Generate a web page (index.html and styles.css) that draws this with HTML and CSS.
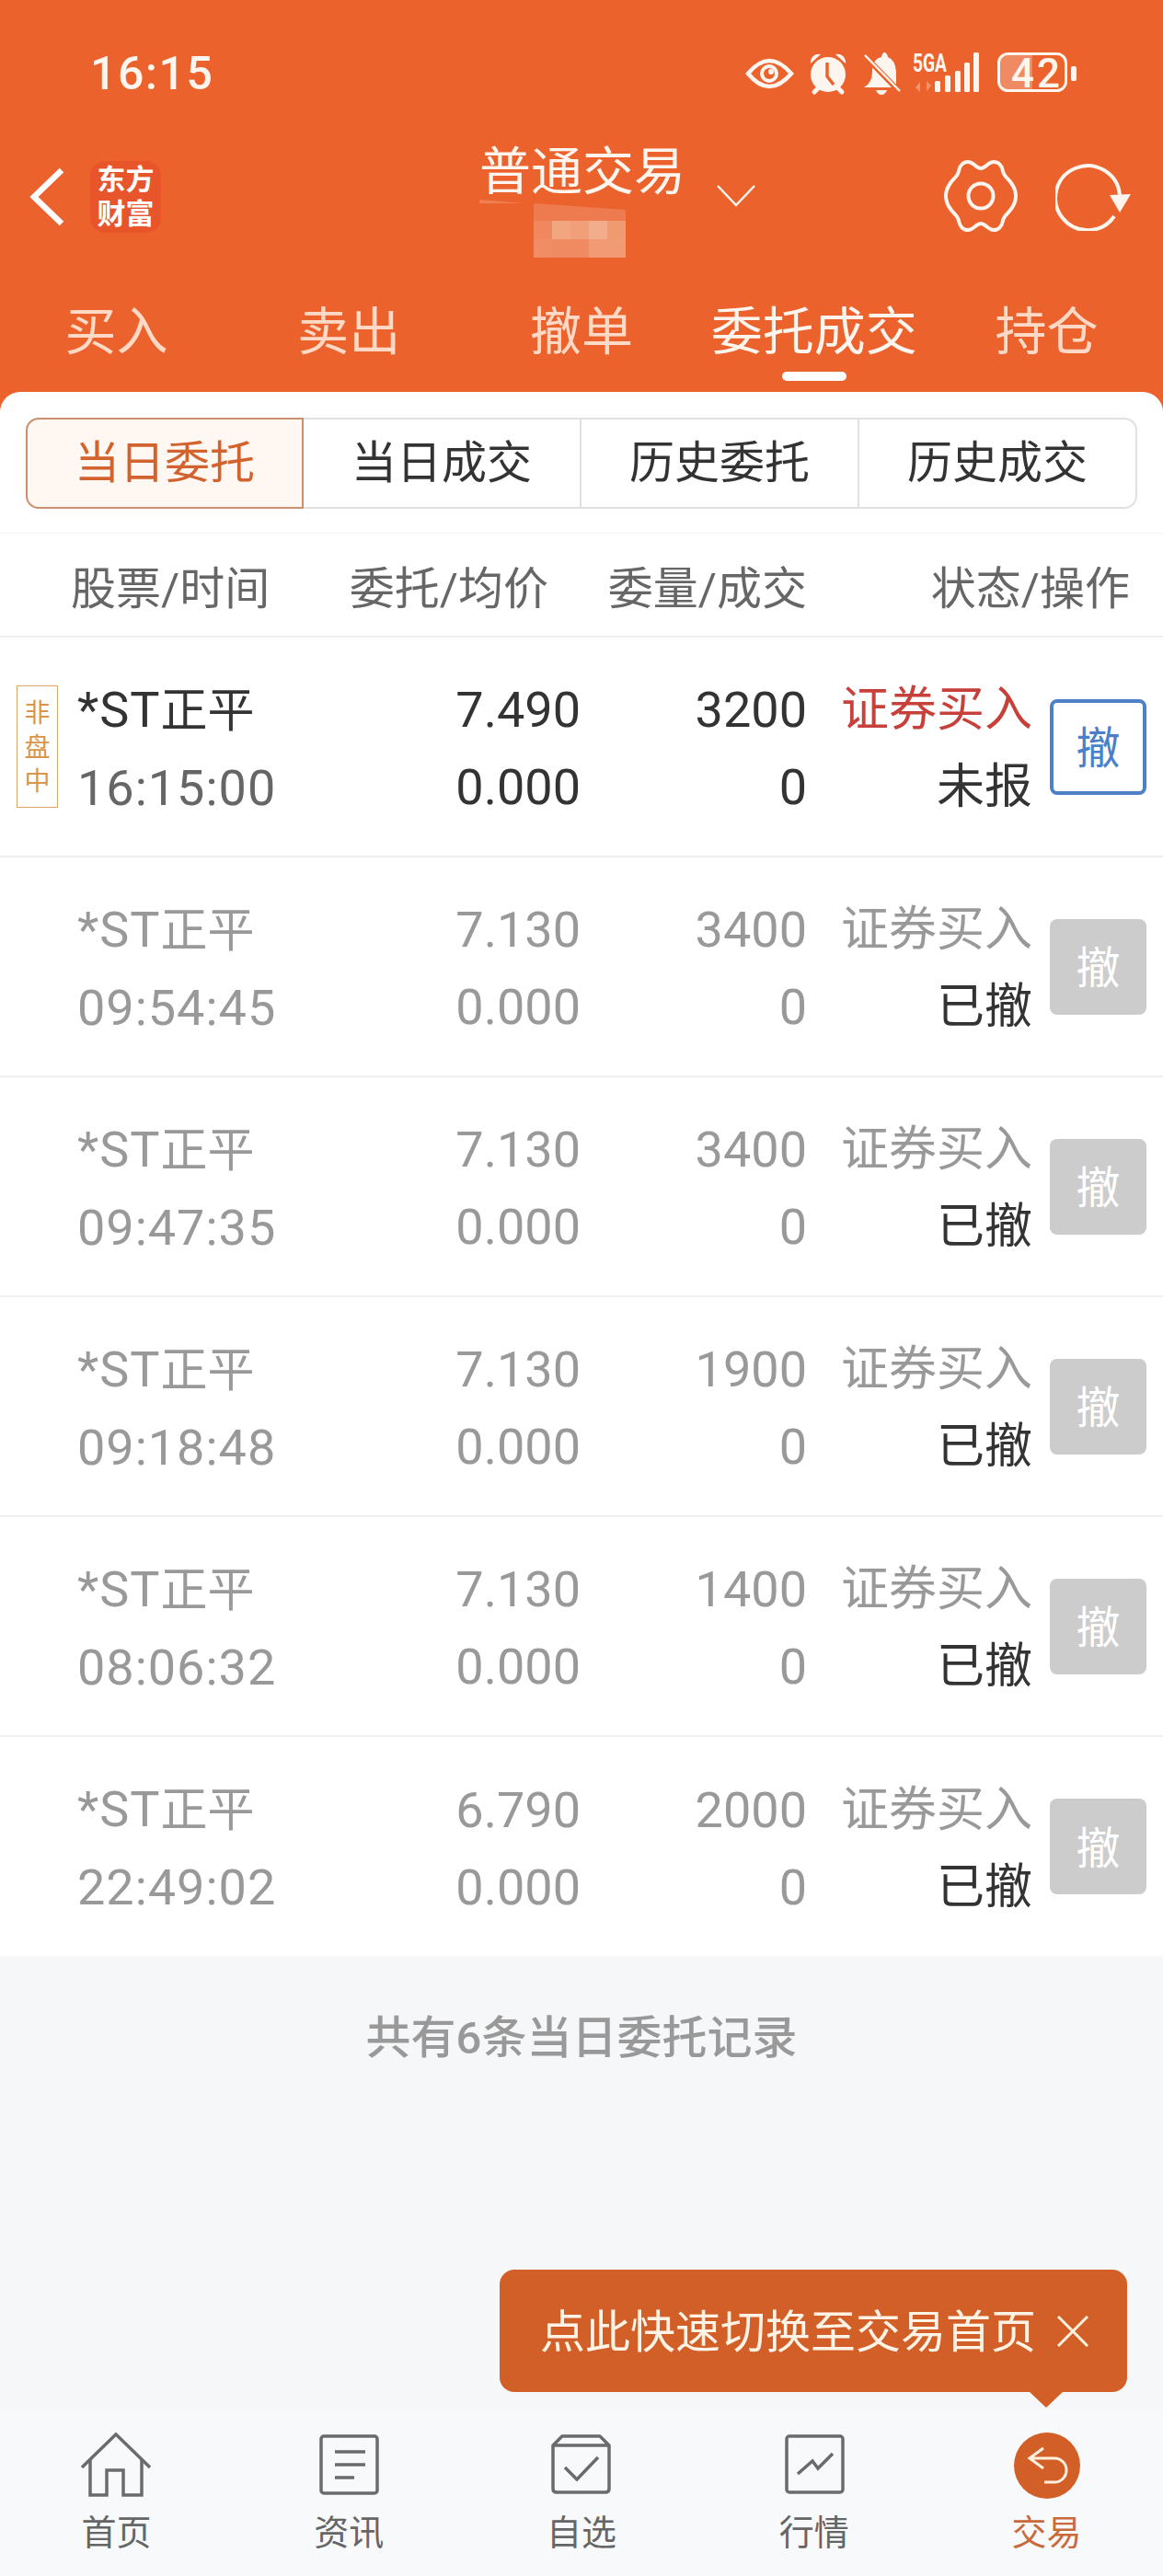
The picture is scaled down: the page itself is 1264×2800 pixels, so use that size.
FILE: index.html
```html
<!DOCTYPE html>
<html lang="zh-CN">
<head>
    <meta charset="UTF-8">
    <meta name="viewport" content="width=device-width, initial-scale=1.0">
    <title>委托成交</title>
    <link rel="stylesheet" href="styles.css">
</head>
<body>
<div class="app">
    <div class="top">
        <div class="statusbar">
            <span class="clock">16:15</span>
            <svg class="status-icons" width="370" height="60" viewBox="805 45 370 60">
                <!-- eye -->
                <path d="M813 80Q836 52 860 80Q836 108 813 80Z" fill="none" stroke="#fff5ef" stroke-width="4.5"/>
                <circle cx="836" cy="80" r="10" fill="#fff5ef"/>
                <circle cx="836" cy="80" r="6" fill="#ec622c"/>
                <circle cx="838" cy="78" r="3" fill="#fff5ef"/>
                <!-- alarm -->
                <circle cx="900" cy="81" r="19" fill="#fff5ef"/>
                <path d="M881 69A9 9 0 0 1 892 59Z M919 69A9 9 0 0 0 908 59Z" fill="#fff5ef"/>
                <path d="M885 100L890 95M915 100L910 95" stroke="#fff5ef" stroke-width="5" stroke-linecap="round"/>
                <path d="M899 68V83L906 92" fill="none" stroke="#ec622c" stroke-width="3.5"/>
                <!-- muted bell -->
                <path d="M939 95Q948 90 948 78Q948 64 958 62Q959 57 961 57Q964 57 965 62Q973 65 974 78V95Z" fill="#fff5ef"/>
                <path d="M952 98H964Q962 103 958 103Q954 103 952 98Z" fill="#fff5ef"/>
                <path d="M939 60L977 99" stroke="#ec622c" stroke-width="6"/>
                <path d="M940 60L978 99" stroke="#fff5ef" stroke-width="2.5"/>
                <!-- signal -->
                <text class="net" x="992" y="78" textLength="37" lengthAdjust="spacingAndGlyphs">5GA</text>
                <path d="M1000 100V89L995 95ZM1007 88V99L1012 93Z" fill="#f5936c"/>
                <g fill="#fff5ef">
                    <rect x="1016" y="88" width="6" height="12" rx="1.5"/>
                    <rect x="1027" y="82" width="6" height="18" rx="1.5"/>
                    <rect x="1038" y="77" width="6" height="23" rx="1.5"/>
                    <rect x="1048" y="68" width="6" height="32" rx="1.5"/>
                    <rect x="1058" y="57" width="6" height="43" rx="1.5"/>
                </g>
                <!-- battery -->
                <path d="M1094 60H1122V97H1094Q1087 97 1087 90V67Q1087 60 1094 60Z" fill="#f08a63"/>
                <rect x="1085.5" y="58.5" width="73" height="40" rx="10" fill="none" stroke="#fff5ef" stroke-width="3"/>
                <rect x="1164" y="72" width="6" height="16" rx="2" fill="#fff5ef"/>
                <text class="batt" x="1099" y="95">42</text>
            </svg>
        </div>

        <div class="navrow">
            <div class="nav-left">
                <svg class="back" width="40" height="66" viewBox="0 0 40 66">
                    <path d="M35 4L5 33L35 62" fill="none" stroke="#fff" stroke-width="6.5"/>
                </svg>
                <div class="logo"><span>东方</span><span>财富</span></div>
            </div>
            <div class="title-box">
                <div class="title">普通交易</div>
                <svg class="mosaic" width="220" height="64" viewBox="521 216 220 64">
                    <polygon points="520,217 570,221 520,221" fill="#ef7f52"/>
                    <polygon points="580,221 680,228 680,240 580,240" fill="#ee7b4f"/>
                    <rect x="580" y="240" width="20" height="20" fill="#f0885f"/>
                    <rect x="600" y="240" width="20" height="20" fill="#f2a680"/>
                    <rect x="620" y="240" width="20" height="20" fill="#f09f78"/>
                    <rect x="640" y="240" width="20" height="20" fill="#f2ae8c"/>
                    <rect x="660" y="240" width="20" height="20" fill="#f09a72"/>
                    <rect x="580" y="260" width="20" height="20" fill="#f08d66"/>
                    <rect x="600" y="260" width="40" height="20" fill="#f08a62"/>
                    <rect x="640" y="260" width="40" height="20" fill="#f19a74"/>
                </svg>
            </div>
            <svg class="caret" width="42" height="24" viewBox="0 0 42 24">
                <path d="M1 1L21 22L41 1" fill="none" stroke="#fff5ef" stroke-width="2.5"/>
            </svg>
            <div class="nav-right">
                <svg width="80" height="80" viewBox="0 0 80 80">
                    <path d="M40 10C45 10 48 3 54 3C59 3 63 7 64 13C65 19 70 21 73 26C76 30 78 35 78 40C78 45 76 50 73 54C70 59 65 61 64 67C63 73 59 77 54 77C48 77 45 70 40 70C35 70 32 77 26 77C21 77 17 73 16 67C15 61 10 59 7 54C4 50 2 45 2 40C2 35 4 30 7 26C10 21 15 19 16 13C17 7 21 3 26 3C32 3 35 10 40 10Z" fill="none" stroke="#fff5ef" stroke-width="4"/>
                    <circle cx="40" cy="40" r="13.5" fill="none" stroke="#fff5ef" stroke-width="4"/>
                </svg>
                <svg width="84" height="76" viewBox="1147 175 84 76">
                    <path d="M1211 235A35 35 0 1 1 1217 212" fill="none" stroke="#fff5ef" stroke-width="4"/>
                    <polygon points="1206,212 1229,211 1217,231" fill="#fff5ef"/>
                </svg>
            </div>
        </div>

        <div class="maintabs">
            <a>买入</a>
            <a>卖出</a>
            <a>撤单</a>
            <a class="on">委托成交</a>
            <a>持仓</a>
        </div>
    </div>

    <div class="card">
        <div class="segs">
            <a class="on">当日委托</a>
            <a>当日成交</a>
            <a>历史委托</a>
            <a>历史成交</a>
        </div>

        <div class="thead">
            <span>股票/时间</span>
            <span>委托/均价</span>
            <span>委量/成交</span>
            <span>状态/操作</span>
        </div>

        <div class="row live">
            <div class="badge">非<br>盘<br>中</div>
            <div class="col-name"><span class="name">*ST<em>正平</em></span><span class="time">16:15:00</span></div>
            <div class="col-num"><span>7.490</span><span>0.000</span></div>
            <div class="col-num"><span>3200</span><span>0</span></div>
            <div class="col-state"><span class="kind">证券买入</span><span class="state">未报</span></div>
            <button class="cancel">撤</button>
        </div>
        <div class="row">
            <div class="slot"></div>
            <div class="col-name"><span class="name">*ST<em>正平</em></span><span class="time">09:54:45</span></div>
            <div class="col-num"><span>7.130</span><span>0.000</span></div>
            <div class="col-num"><span>3400</span><span>0</span></div>
            <div class="col-state"><span class="kind">证券买入</span><span class="state">已撤</span></div>
            <button class="cancel">撤</button>
        </div>
        <div class="row">
            <div class="slot"></div>
            <div class="col-name"><span class="name">*ST<em>正平</em></span><span class="time">09:47:35</span></div>
            <div class="col-num"><span>7.130</span><span>0.000</span></div>
            <div class="col-num"><span>3400</span><span>0</span></div>
            <div class="col-state"><span class="kind">证券买入</span><span class="state">已撤</span></div>
            <button class="cancel">撤</button>
        </div>
        <div class="row">
            <div class="slot"></div>
            <div class="col-name"><span class="name">*ST<em>正平</em></span><span class="time">09:18:48</span></div>
            <div class="col-num"><span>7.130</span><span>0.000</span></div>
            <div class="col-num"><span>1900</span><span>0</span></div>
            <div class="col-state"><span class="kind">证券买入</span><span class="state">已撤</span></div>
            <button class="cancel">撤</button>
        </div>
        <div class="row">
            <div class="slot"></div>
            <div class="col-name"><span class="name">*ST<em>正平</em></span><span class="time">08:06:32</span></div>
            <div class="col-num"><span>7.130</span><span>0.000</span></div>
            <div class="col-num"><span>1400</span><span>0</span></div>
            <div class="col-state"><span class="kind">证券买入</span><span class="state">已撤</span></div>
            <button class="cancel">撤</button>
        </div>
        <div class="row last">
            <div class="slot"></div>
            <div class="col-name"><span class="name">*ST<em>正平</em></span><span class="time">22:49:02</span></div>
            <div class="col-num"><span>6.790</span><span>0.000</span></div>
            <div class="col-num"><span>2000</span><span>0</span></div>
            <div class="col-state"><span class="kind">证券买入</span><span class="state">已撤</span></div>
            <button class="cancel">撤</button>
        </div>
    </div>

    <div class="summary">共有6条当日委托记录</div>

    <div class="tabbar">
        <a>
            <svg width="80" height="72" viewBox="0 0 80 72">
                <path d="M3 38L40 2L77 38" fill="none" stroke="#6b6b6b" stroke-width="3.5"/>
                <path d="M12 29V68H30V41H48V68H68V29" fill="none" stroke="#6b6b6b" stroke-width="3.5"/>
            </svg>
            <span>首页</span>
        </a>
        <a>
            <svg width="80" height="72" viewBox="0 0 80 72">
                <rect x="10" y="4" width="61" height="62" rx="3" fill="none" stroke="#6b6b6b" stroke-width="3.5"/>
                <path d="M25 21H58M25 35H58M25 49H46" fill="none" stroke="#6b6b6b" stroke-width="3.5"/>
            </svg>
            <span>资讯</span>
        </a>
        <a>
            <svg width="80" height="72" viewBox="0 0 80 72">
                <path d="M9 14L19 4H60L70 14V61Q70 65 66 65H13Q9 65 9 61ZM9 14H70" fill="none" stroke="#6b6b6b" stroke-width="3.5" stroke-linejoin="round"/>
                <path d="M22 38L35 51L58 27" fill="none" stroke="#6b6b6b" stroke-width="3.5"/>
            </svg>
            <span>自选</span>
        </a>
        <a>
            <svg width="80" height="72" viewBox="0 0 80 72">
                <rect x="10" y="4" width="61" height="61" rx="3" fill="none" stroke="#6b6b6b" stroke-width="3.5"/>
                <path d="M22 45L38 31L44 39L60 23" fill="none" stroke="#6b6b6b" stroke-width="3.5"/>
            </svg>
            <span>行情</span>
        </a>
        <a class="on">
            <svg width="80" height="72" viewBox="0 0 80 72">
                <circle cx="40" cy="36" r="36" fill="#d35f28"/>
                <path d="M36 17L21 28L36 39M21 28H48A13 13 0 0 1 48 54H37" fill="none" stroke="#fff0e0" stroke-width="3"/>
            </svg>
            <span>交易</span>
        </a>
    </div>

    <div class="tip">
        <span>点此快速切换至交易首页</span>
        <svg width="34" height="34" viewBox="0 0 34 34">
            <path d="M1 1L33 33M33 1L1 33" stroke="#fff0e0" stroke-width="3"/>
        </svg>
    </div>
</div>
</body>
</html>
```

FILE: styles.css
```css
* {
    box-sizing: border-box;
    margin: 0;
    padding: 0;
    font-family: Roboto, "Noto Sans CJK SC", sans-serif;
}

body {
    background: #f5f7f9;
}

.app {
    position: relative;
    width: 1264px;
    height: 2800px;
    display: flex;
    flex-direction: column;
    overflow: hidden;
}

/* orange header */
.top {
    height: 456px;
    background: #ec622c;
    color: #fff5ef;
}

.statusbar {
    height: 105px;
    padding: 45px 0 0 98px;
    display: flex;
    justify-content: space-between;
}

.clock {
    margin-top: 10px;
    font-size: 50px;
    line-height: 50px;
    font-weight: 500;
    letter-spacing: 1.5px;
}

.status-icons {
    margin-right: 89px;
}

.net {
    font-size: 28px;
    font-weight: 700;
    fill: #fff5ef;
    font-family: "Liberation Sans Narrow", Roboto, sans-serif;
}

.batt {
    font-size: 44px;
    font-weight: 500;
    letter-spacing: 3px;
    fill: #fff5ef;
}

.navrow {
    height: 150px;
    margin-top: 49px;
    display: flex;
    align-items: flex-start;
}

.nav-left {
    width: 521px;
    padding: 21px 0 0 32px;
    display: flex;
    align-items: center;
}

.back {
    margin-right: 26px;
}

.logo {
    width: 77px;
    height: 78px;
    border-radius: 16px;
    background: #e8552b;
    color: #fff;
    font-size: 31px;
    line-height: 37px;
    font-weight: 700;
    display: flex;
    flex-direction: column;
    align-items: center;
    justify-content: center;
}

.title-box {
    width: 220px;
}

.title {
    margin-top: 3px;
    font-size: 56px;
    line-height: 60px;
    text-align: center;
    white-space: nowrap;
}

.mosaic {
    display: block;
    margin-top: -1px;
}

.caret {
    margin: 47px 0 0 38px;
}

.nav-right {
    margin-left: auto;
    padding: 19px 33px 0 0;
    display: flex;
    align-items: center;
    gap: 41px;
}

.maintabs {
    display: grid;
    grid-template-columns: repeat(5, 1fr);
    height: 122px;
    position: relative;
}

.maintabs a {
    position: relative;
    text-align: center;
    font-size: 56px;
    line-height: 114px;
    color: #ffd9c6;
}

.maintabs a.on {
    color: #fff5ef;
}

.maintabs a.on::after {
    content: "";
    position: absolute;
    left: 50%;
    bottom: 12px;
    width: 70px;
    height: 10px;
    margin-left: -35px;
    border-radius: 5px;
    background: #fff;
}

/* white card */
.card {
    margin-top: -30px;
    background: #fff;
    border-radius: 22px 22px 0 0;
    padding-top: 28px;
    position: relative;
}

.segs {
    margin: 0 28px 28px;
    height: 97px;
    display: grid;
    grid-template-columns: repeat(4, 1fr);
}

.segs a {
    border: 2px solid #e0e0e0;
    border-left-width: 0;
    text-align: center;
    font-size: 49px;
    line-height: 95px;
    color: #333;
}

.segs a:last-child {
    border-radius: 0 14px 14px 0;
}

.segs a.on {
    border: 2px solid #c98f6e;
    border-radius: 14px 0 0 14px;
    background: #fff7f2;
    color: #d2622e;
}

.thead {
    height: 114px;
    border-top: 1px solid #f6f6f6;
    border-bottom: 2px solid #f0f0f0;
    display: grid;
    padding-left: 77px;
    grid-template-columns: 223px 296px 281px 351px;
    align-items: center;
    font-size: 49px;
    color: #666;
}

.thead span + span {
    text-align: right;
}

.row {
    height: 239px;
    border-bottom: 2px solid #f0f0f0;
    display: grid;
    grid-template-columns: 84px 316px 231px 246px 245px 1fr;
    align-items: center;
    color: #999;
    font-size: 54px;
    line-height: 84px;
}

.row.last {
    height: 238px;
    border-bottom: 0;
}

.col-name,
.col-num,
.col-state {
    margin-top: 5px;
    display: flex;
    flex-direction: column;
}

.col-num,
.col-state {
    align-items: flex-end;
}

.name {
    letter-spacing: 1px;
}

.name em {
    font-style: normal;
    font-size: 51px;
    letter-spacing: 0;
}

.time {
    letter-spacing: 1px;
}

.kind,
.state {
    font-size: 52px;
}

.state {
    color: #333;
}

.cancel {
    width: 105px;
    height: 104px;
    margin-left: 19px;
    padding-bottom: 5px;
    border: 0;
    border-radius: 8px;
    background: #cccccc;
    color: #fff;
    font-size: 48px;
}

.badge {
    width: 45px;
    height: 133px;
    margin-left: 18px;
    border: 1px solid #d9a868;
    color: #d9954a;
    font-size: 28px;
    line-height: 37px;
    text-align: center;
    padding-top: 11px;
}

.live .name,
.live .col-num {
    color: #333;
}

.live .time {
    color: #666;
}

.live .kind {
    color: #c8403a;
}

.live .cancel {
    background: #fff;
    border: 4px solid #4f7fc4;
    color: #4a7fc9;
}

.summary {
    flex: 1;
    padding-top: 60px;
    text-align: center;
    font-size: 49px;
    line-height: 60px;
    font-weight: 500;
    color: #999;
}

/* bottom bar */
.tabbar {
    height: 180px;
    padding-top: 24px;
    background: #f8f9fb;
    display: grid;
    grid-template-columns: repeat(5, 1fr);
}

.tabbar a {
    display: flex;
    flex-direction: column;
    align-items: center;
    color: #666;
    font-size: 38px;
    line-height: 50px;
}

.tabbar span {
    margin-top: 12px;
}

.tabbar a.on {
    color: #c96a3c;
}

.tip {
    position: absolute;
    right: 39px;
    bottom: 200px;
    width: 682px;
    height: 133px;
    padding: 0 0 7px 44px;
    border-radius: 16px;
    background: #d35f28;
    color: #fff3e6;
    font-size: 49px;
    display: flex;
    align-items: center;
    gap: 23px;
}

.tip svg {
    margin-top: 7px;
}

.tip::after {
    content: "";
    position: absolute;
    left: 576px;
    top: 133px;
    border-top: 17px solid #d35f28;
    border-left: 18px solid transparent;
    border-right: 18px solid transparent;
}
```
